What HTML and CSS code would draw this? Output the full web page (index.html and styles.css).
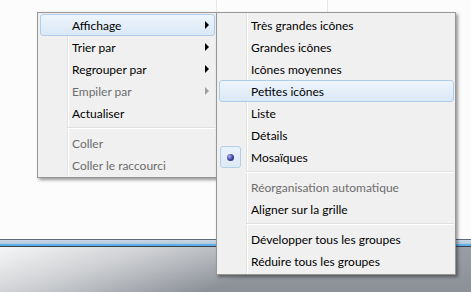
FILE: index.html
```html
<!doctype html>
<html>
<head>
    <meta charset="utf-8">
    <title>Menu contextuel</title>
    <link rel="stylesheet" href="styles.css">
</head>
<body>
    <div class="window">
        <div class="col-line first"></div>
        <div class="col-line second"></div>
    </div>
    <div class="frame"></div>
    <div class="desktop"></div>

    <div class="menu main-menu">
        <div class="item hover"><span class="icon"></span><span class="label">Affichage</span><span class="arrow"></span></div>
        <div class="item"><span class="icon"></span><span class="label">Trier par</span><span class="arrow"></span></div>
        <div class="item"><span class="icon"></span><span class="label">Regrouper par</span><span class="arrow"></span></div>
        <div class="item disabled"><span class="icon"></span><span class="label">Empiler par</span><span class="arrow"></span></div>
        <div class="item"><span class="icon"></span><span class="label">Actualiser</span></div>
        <div class="separator"></div>
        <div class="item disabled"><span class="icon"></span><span class="label">Coller</span></div>
        <div class="item disabled"><span class="icon"></span><span class="label">Coller le raccourci</span></div>
    </div>

    <div class="menu sub-menu">
        <div class="item"><span class="icon"></span><span class="label">Très grandes icônes</span></div>
        <div class="item"><span class="icon"></span><span class="label">Grandes icônes</span></div>
        <div class="item"><span class="icon"></span><span class="label">Icônes moyennes</span></div>
        <div class="item hover"><span class="icon"></span><span class="label">Petites icônes</span></div>
        <div class="item"><span class="icon"></span><span class="label">Liste</span></div>
        <div class="item"><span class="icon"></span><span class="label">Détails</span></div>
        <div class="item"><span class="icon checked"><span class="bullet"></span></span><span class="label">Mosaïques</span></div>
        <div class="separator"></div>
        <div class="item disabled"><span class="icon"></span><span class="label">Réorganisation automatique</span></div>
        <div class="item"><span class="icon"></span><span class="label">Aligner sur la grille</span></div>
        <div class="separator"></div>
        <div class="item"><span class="icon"></span><span class="label">Développer tous les groupes</span></div>
        <div class="item"><span class="icon"></span><span class="label">Réduire tous les groupes</span></div>
    </div>
</body>
</html>
```

FILE: styles.css
```css
body {
    margin: 0;
    padding: 0;
    width: 471px;
    height: 292px;
    overflow: hidden;
    position: relative;
    font-family: Lato, "Noto Sans", sans-serif;
    font-size: 12px;
    background-color: #fcfcfc;
}
.window {
    height: 239px;
    background-color: #fcfcfc;
    position: relative;
}
.col-line {
    position: absolute;
    top: 0;
    width: 1px;
    height: 14px;
    background-color: #e6e6e6;
}
.col-line.first {
    left: 216px;
}
.col-line.second {
    left: 327px;
}
.frame {
    height: 6px;
    border-top: 1px solid #5d6a78;
    border-bottom: 1px solid #3b4048;
    background: linear-gradient(to bottom, #c9d7e6 0, #b3c7dc 70%, #58b0e6 70%, #58b0e6 100%);
}
.desktop {
    height: 45px;
    background:
        linear-gradient(160deg, rgba(255,255,255,0.9) 0, rgba(255,255,255,0.55) 25%, rgba(255,255,255,0) 55%),
        linear-gradient(to bottom, #9a9ea4, #8b9097);
}
.menu {
    position: absolute;
    top: 12px;
    box-sizing: border-box;
    border: 1px solid #979797;
    padding: 1px 1px 1px 2px;
    display: flex;
    flex-direction: column;
    background:
        linear-gradient(to right, transparent 29px, #e2e3e3 29px, #e2e3e3 30px, #ffffff 30px, #ffffff 31px, transparent 31px),
        #f0f0f0;
    box-shadow: 2px 2px 3px rgba(0, 0, 0, 0.4);
}
.main-menu {
    left: 37px;
    width: 180px;
}
.sub-menu {
    left: 216px;
    width: 240px;
    padding-bottom: 2px;
}
.item {
    display: flex;
    align-items: center;
    height: 20px;
    border: 1px solid transparent;
    border-radius: 3px;
    color: #000;
    padding-right: 5px;
}
.item.hover {
    border-color: #aecdeb;
    background: linear-gradient(to bottom, #eef5fc, #dae8f6);
}
.item.disabled {
    color: #6d6d6d;
}
.icon {
    width: 19px;
    height: 20px;
    margin: -1px 10px -1px 0;
    flex: none;
    display: flex;
    align-items: center;
    justify-content: center;
    border: 1px solid transparent;
    border-radius: 3px;
}
.icon.checked {
    border-color: #b5cfe9;
    background: linear-gradient(to bottom, #eaf2fa, #dde9f5);
}
.bullet {
    width: 7px;
    height: 7px;
    border-radius: 50%;
    background: radial-gradient(circle at 35% 35%, #a9b0e6 0, #3a3f9c 55%, #1b1d62 100%);
}
.label {
    flex: 1;
    white-space: nowrap;
}
.arrow {
    width: 0;
    height: 0;
    border-top: 4px solid transparent;
    border-bottom: 4px solid transparent;
    border-left: 4px solid #000;
}
.disabled .arrow {
    border-left-color: #a0a0a0;
}
.separator {
    height: 8px;
    margin-left: 27px;
    box-sizing: border-box;
    padding-top: 3px;
}
.separator::before {
    content: "";
    display: block;
    border-top: 1px solid #e0e0e0;
    border-bottom: 1px solid #ffffff;
}
```
